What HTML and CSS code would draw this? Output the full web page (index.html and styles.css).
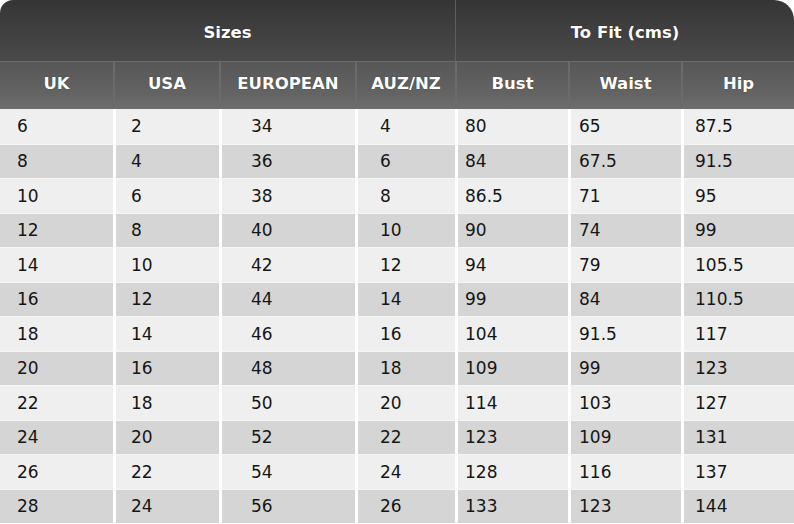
FILE: index.html
```html
<!DOCTYPE html>
<html>
<head>
<meta charset="utf-8">
<link rel="stylesheet" href="styles.css">
</head>
<body>
<table class="chart">
  <colgroup>
    <col class="c-uk"><col class="c-usa"><col class="c-eu"><col class="c-au"><col class="c-bust"><col class="c-waist"><col class="c-hip">
  </colgroup>
  <thead>
    <tr class="group">
      <th colspan="4" class="g-sizes">Sizes</th>
      <th colspan="3" class="g-fit">To Fit (cms)</th>
    </tr>
    <tr class="cols">
      <th>UK</th><th>USA</th><th>EUROPEAN</th><th>AUZ/NZ</th><th>Bust</th><th>Waist</th><th>Hip</th>
    </tr>
  </thead>
  <tbody>
    <tr><td>6</td><td>2</td><td>34</td><td>4</td><td>80</td><td>65</td><td>87.5</td></tr>
    <tr><td>8</td><td>4</td><td>36</td><td>6</td><td>84</td><td>67.5</td><td>91.5</td></tr>
    <tr><td>10</td><td>6</td><td>38</td><td>8</td><td>86.5</td><td>71</td><td>95</td></tr>
    <tr><td>12</td><td>8</td><td>40</td><td>10</td><td>90</td><td>74</td><td>99</td></tr>
    <tr><td>14</td><td>10</td><td>42</td><td>12</td><td>94</td><td>79</td><td>105.5</td></tr>
    <tr><td>16</td><td>12</td><td>44</td><td>14</td><td>99</td><td>84</td><td>110.5</td></tr>
    <tr><td>18</td><td>14</td><td>46</td><td>16</td><td>104</td><td>91.5</td><td>117</td></tr>
    <tr><td>20</td><td>16</td><td>48</td><td>18</td><td>109</td><td>99</td><td>123</td></tr>
    <tr><td>22</td><td>18</td><td>50</td><td>20</td><td>114</td><td>103</td><td>127</td></tr>
    <tr><td>24</td><td>20</td><td>52</td><td>22</td><td>123</td><td>109</td><td>131</td></tr>
    <tr><td>26</td><td>22</td><td>54</td><td>24</td><td>128</td><td>116</td><td>137</td></tr>
    <tr><td>28</td><td>24</td><td>56</td><td>26</td><td>133</td><td>123</td><td>144</td></tr>
  </tbody>
</table>
</body>
</html>
```
FILE: styles.css
```css
html, body {
  margin: 0;
  padding: 0;
  background: #ffffff;
}

.chart {
  width: 794px;
  border-collapse: separate;
  border-spacing: 0;
  table-layout: fixed;
  font-family: "DejaVu Sans", Verdana, sans-serif;
}

.c-uk { width: 113px; }
.c-usa { width: 106px; }
.c-eu { width: 136px; }
.c-au { width: 100px; }
.c-bust { width: 113px; }
.c-waist { width: 113px; }
.c-hip { width: 113px; }

.chart th {
  color: #ffffff;
  font-weight: bold;
  font-size: 16.5px;
  text-align: center;
  padding: 0;
  text-shadow: 0 0 1px rgba(0, 0, 0, 0.6);
}

.group th {
  height: 62px;
  background: linear-gradient(#353535, #4a4a4a);
  border-bottom: 1px solid #6a6a6a;
  padding-top: 4px;
  box-sizing: border-box;
}

.group .g-sizes {
  border-top-left-radius: 13px;
}

.group .g-fit {
  border-top-right-radius: 20px;
  border-left: 1px solid #5e5e5e;
}

.cols th {
  height: 47px;
  background: linear-gradient(#575757, #646464 70%, #6e6e6e);
  border-left: 2px solid #6b6b6b;
  padding-bottom: 4px;
  box-sizing: border-box;
}

.cols th:first-child {
  border-left: none;
}

.chart td {
  height: 34.5px;
  padding: 0;
  font-size: 17px;
  color: #151515;
  vertical-align: middle;
  border-left: 3px solid #ffffff;
  background: #efefef;
  box-sizing: border-box;
}

.chart tbody tr:nth-child(even) td {
  background: #d5d5d5;
}

.chart tbody tr:nth-child(n+2) td {
  border-top: 1px solid #f6f6f6;
}

.chart td:nth-child(1) { border-left: none; padding-left: 17px; }
.chart td:nth-child(2) { padding-left: 15px; }
.chart td:nth-child(3) { padding-left: 29px; }
.chart td:nth-child(4) { padding-left: 22px; }
.chart td:nth-child(5) { padding-left: 7px; }
.chart td:nth-child(6) { padding-left: 8px; }
.chart td:nth-child(7) { padding-left: 11px; }
```
